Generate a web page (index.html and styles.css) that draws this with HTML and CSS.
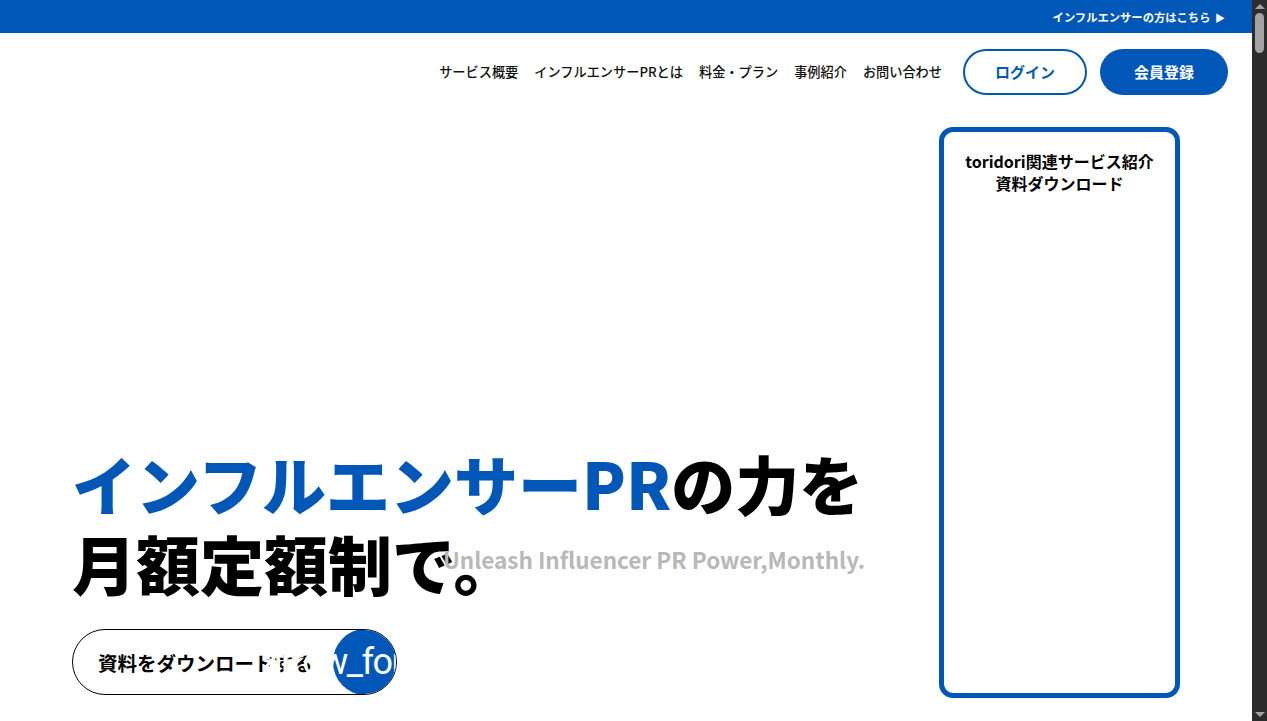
FILE: index.html
```html
<!DOCTYPE html>
<html lang="ja">
<head>
<meta charset="utf-8">
<title>toridori</title>
<link rel="stylesheet" href="styles.css">
</head>
<body>
<div class="topbar">
  <a class="topbar-link" href="#">インフルエンサーの方はこちら <span class="tri">▶</span></a>
</div>
<header class="header">
  <nav class="nav">
    <a href="#">サービス概要</a>
    <a href="#">インフルエンサーPRとは</a>
    <a href="#">料金・プラン</a>
    <a href="#">事例紹介</a>
    <a href="#">お問い合わせ</a>
  </nav>
  <div class="header-btns">
    <a class="btn-login" href="#">ログイン</a>
    <a class="btn-register" href="#">会員登録</a>
  </div>
</header>
<main class="main">
  <section class="hero">
    <div class="headline-wrap">
      <h1 class="headline"><span class="blue">インフルエンサーPR</span>の力を<br>月額定額制で。</h1>
      <p class="sub">Unleash Influencer PR Power,Monthly.</p>
    </div>
    <a class="dl-btn" href="#">
      <span class="dl-text">資料をダウンロードする</span>
      <span class="dl-circle"></span>
      <span class="dl-icon">arrow_forward</span>
    </a>
  </section>
  <aside class="side-card">
    <p class="side-title">toridori関連サービス紹介<br>資料ダウンロード</p>
  </aside>
</main>
<section class="below"></section>
<div class="scrollbar" aria-hidden="true">
  <span class="sb-arrow sb-up"></span>
  <span class="sb-thumb"></span>
  <span class="sb-arrow sb-down"></span>
</div>
</body>
</html>
```

FILE: styles.css
```css
* { box-sizing: border-box; }
html, body { margin: 0; padding: 0; }
body {
  font-family: "Noto Sans CJK JP", "Noto Sans", sans-serif;
  color: #111;
  background: #fff;
  margin-right: 15px;
}
a { text-decoration: none; color: inherit; }

.scrollbar {
  position: fixed;
  top: 0;
  right: 0;
  bottom: 0;
  width: 15px;
  background: #2c2c2c;
  display: flex;
  flex-direction: column;
  align-items: center;
}
.sb-arrow {
  width: 0;
  height: 0;
  border-left: 5px solid transparent;
  border-right: 5px solid transparent;
}
.sb-up {
  margin-top: 4px;
  border-bottom: 5px solid #a3a3a3;
}
.sb-down {
  margin-top: auto;
  margin-bottom: 4px;
  border-top: 5px solid #a3a3a3;
}
.sb-thumb {
  margin-top: 4px;
  width: 9px;
  height: 40px;
  border-radius: 5px;
  background: #a3a3a3;
}

.topbar {
  height: 33px;
  background: #0057b7;
  display: flex;
  justify-content: flex-end;
  align-items: center;
  padding-right: 27px;
}
.topbar-link {
  color: #fff;
  font-size: 11.3px;
  font-weight: 700;
}
.tri { font-size: 10px; margin-left: 2px; }

.header {
  height: 77px;
  display: flex;
  justify-content: flex-end;
  align-items: center;
  padding-right: 24px;
}
.nav {
  display: flex;
  gap: 16px;
  font-size: 13.2px;
  font-weight: 500;
  color: #111;
  margin-right: 21px;
}
.header-btns { display: flex; gap: 13px; }
.btn-login, .btn-register {
  height: 46px;
  border-radius: 23px;
  display: flex;
  align-items: center;
  justify-content: center;
  font-size: 15px;
  font-weight: 700;
}
.btn-login {
  width: 124px;
  border: 2px solid #0057b7;
  color: #0057b7;
}
.btn-register {
  width: 128px;
  background: #0057b7;
  color: #fff;
}

.main {
  display: grid;
  grid-template-columns: 1fr 241px;
  padding: 17px 72px 0 72px;
  column-gap: 40px;
}
.hero {
  display: flex;
  flex-direction: column;
  justify-content: flex-end;
  padding-bottom: 3px;
}
.headline-wrap {
  position: relative;
  width: 795px;
}
.headline {
  margin: 0;
  font-size: 64px;
  font-weight: 900;
  line-height: 80px;
  color: #000;
}
.blue { color: #0057b7; }
.sub {
  position: absolute;
  right: 2px;
  bottom: 28px;
  margin: 0;
  font-family: "Noto Sans CJK JP", sans-serif;
  font-size: 22.5px;
  font-weight: 700;
  line-height: 30px;
  color: #b8b8b8;
}
.dl-btn {
  position: relative;
  overflow: hidden;
  margin-top: 27px;
  width: 325px;
  height: 66px;
  border: 1px solid #000;
  border-radius: 33px;
  display: flex;
  align-items: center;
  padding-left: 25px;
}
.dl-text {
  font-size: 19.5px;
  font-weight: 700;
  color: #000;
}
.dl-circle {
  position: absolute;
  right: -1px;
  top: -1px;
  width: 64px;
  height: 66px;
  border-radius: 50%;
  background: #0057b7;
}
.dl-icon {
  position: absolute;
  left: 190px;
  top: 50%;
  transform: translateY(-50%);
  font-family: Roboto, sans-serif;
  font-size: 36px;
  letter-spacing: -1.5px;
  color: #fff;
  white-space: nowrap;
}

.side-card {
  height: 571px;
  border: 5px solid #0057b7;
  border-radius: 14px;
  padding-top: 18px;
}
.side-title {
  margin: 0;
  text-align: center;
  font-size: 16px;
  font-weight: 700;
  line-height: 22px;
  color: #000;
}
.below { height: 11600px; }
```
